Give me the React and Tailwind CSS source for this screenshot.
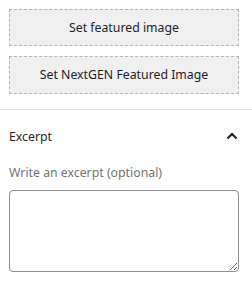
export default function App() {
  return (
    <div
      className="w-[252px] h-[282px] bg-white text-[#1e1e1e] overflow-hidden"
      style={{ fontFamily: '"Noto Sans", "Open Sans", sans-serif' }}
    >
      <div className="pt-[9px] pl-[9px] w-[239px] flex flex-col gap-[10px] pb-[15px]">
        <button className="h-[37px] w-full bg-[#f0f0f1] border border-dashed border-[#b4b6b9] text-[12.3px] leading-none pt-[1px]">
          Set featured image
        </button>
        <button className="h-[38px] w-full bg-[#f0f0f1] border border-dashed border-[#b4b6b9] text-[12.3px] leading-none pt-[1px]">
          Set NextGEN Featured Image
        </button>
      </div>
      <div className="border-t border-[#e0e0e0]">
        <div className="h-[52px] pl-[9px] pr-[14px] flex items-center justify-between">
          <span className="text-[12.3px] pt-[2px]">Excerpt</span>
          <svg width="12" height="8" viewBox="0 0 12 8" fill="none">
            <path d="M1.5 6.5L6 2l4.5 4.5" stroke="#1e1e1e" strokeWidth="2" />
          </svg>
        </div>
        <div className="pl-[9px] w-[239px]">
          <div className="text-[12.3px] text-[#757575] leading-[16px] mt-[3px]">
            Write an excerpt (optional)
          </div>
          <textarea className="mt-[9px] block w-[230px] h-[82px] border border-[#8c8f94] rounded-[4px] resize-y" />
        </div>
      </div>
    </div>
  );
}
